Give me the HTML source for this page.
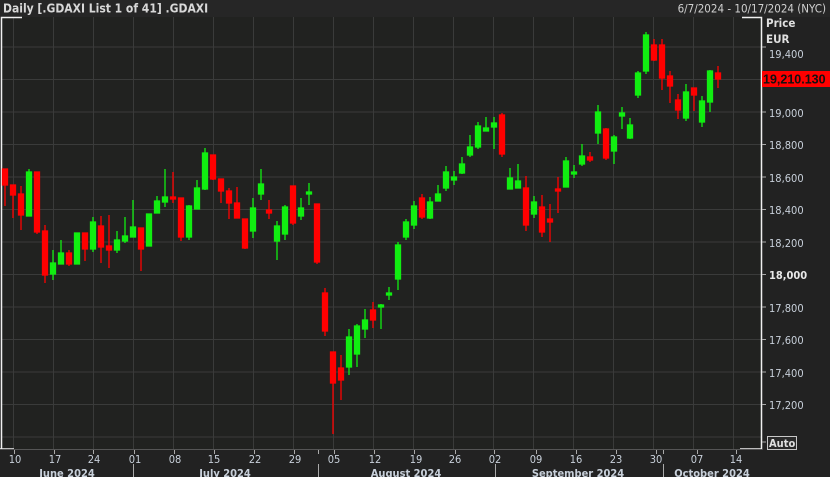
<!DOCTYPE html>
<html><head><meta charset="utf-8"><style>
html,body{margin:0;padding:0;background:#222222;width:830px;height:477px;overflow:hidden}
svg{display:block}
text{font-family:"DejaVu Sans Condensed","Liberation Sans",sans-serif}
</style></head><body>
<svg width="830" height="477" viewBox="0 0 830 477" xmlns="http://www.w3.org/2000/svg">
<rect width="830" height="477" fill="#222222"/>
<rect x="0" y="0" width="830" height="17" fill="#262626"/>
<text x="3" y="12.5" font-size="12" font-weight="bold" fill="#d8d8d8">Daily [.GDAXI List 1 of 41] .GDAXI</text>
<text x="826" y="12.5" font-size="11.5" fill="#d0d0d0" text-anchor="end">6/7/2024 - 10/17/2024 (NYC)</text>
<rect x="1" y="17" width="760" height="432" fill="#212220"/>
<g stroke="#3a3b3a" stroke-width="1">
<line x1="1" y1="47" x2="761" y2="47"/><line x1="1" y1="79.5" x2="761" y2="79.5"/><line x1="1" y1="112" x2="761" y2="112"/><line x1="1" y1="144.5" x2="761" y2="144.5"/><line x1="1" y1="177" x2="761" y2="177"/><line x1="1" y1="209.5" x2="761" y2="209.5"/><line x1="1" y1="242" x2="761" y2="242"/><line x1="1" y1="274.5" x2="761" y2="274.5"/><line x1="1" y1="307" x2="761" y2="307"/><line x1="1" y1="339.5" x2="761" y2="339.5"/><line x1="1" y1="372" x2="761" y2="372"/><line x1="1" y1="404.5" x2="761" y2="404.5"/><line x1="1" y1="437" x2="761" y2="437"/>
<line x1="13.5" y1="17" x2="13.5" y2="449"/><line x1="53.5" y1="17" x2="53.5" y2="449"/><line x1="93.5" y1="17" x2="93.5" y2="449"/><line x1="133.5" y1="17" x2="133.5" y2="449"/><line x1="173.5" y1="17" x2="173.5" y2="449"/><line x1="213.5" y1="17" x2="213.5" y2="449"/><line x1="253.5" y1="17" x2="253.5" y2="449"/><line x1="293.5" y1="17" x2="293.5" y2="449"/><line x1="333.5" y1="17" x2="333.5" y2="449"/><line x1="373.5" y1="17" x2="373.5" y2="449"/><line x1="413.5" y1="17" x2="413.5" y2="449"/><line x1="453.5" y1="17" x2="453.5" y2="449"/><line x1="493.5" y1="17" x2="493.5" y2="449"/><line x1="533.5" y1="17" x2="533.5" y2="449"/><line x1="573.5" y1="17" x2="573.5" y2="449"/><line x1="613.5" y1="17" x2="613.5" y2="449"/><line x1="653.5" y1="17" x2="653.5" y2="449"/><line x1="693.5" y1="17" x2="693.5" y2="449"/><line x1="733.5" y1="17" x2="733.5" y2="449"/>
</g>
<g stroke="#f0f0f0" stroke-width="1.5" fill="none">
<path d="M1.5 449 V17.5 H22"/>
<path d="M742 17.5 H761.5 V449 H740"/>
<path d="M0 449 H14"/>
</g>
<line x1="0" y1="449.5" x2="762" y2="449.5" stroke="#555" stroke-width="1"/>
<g stroke="#ff0000" fill="#ff0000" stroke-width="1.3">
<line x1="5" y1="169" x2="5" y2="206"/><rect x="2.5" y="169" width="5" height="16"/>
<line x1="13" y1="185" x2="13" y2="218"/><rect x="10.5" y="185" width="5" height="10"/>
<line x1="21" y1="186" x2="21" y2="230"/><rect x="18.5" y="194" width="5" height="21"/>
<line x1="37" y1="172" x2="37" y2="234"/><rect x="34.5" y="172" width="5" height="60"/>
<line x1="45" y1="225" x2="45" y2="283"/><rect x="42.5" y="231" width="5" height="44"/>
<line x1="69" y1="250" x2="69" y2="266"/><rect x="66.5" y="253" width="5" height="11"/>
<line x1="85" y1="233" x2="85" y2="261"/><rect x="82.5" y="233" width="5" height="16"/>
<line x1="101" y1="216" x2="101" y2="263"/><rect x="98.5" y="226" width="5" height="21"/>
<line x1="109" y1="215" x2="109" y2="268"/><rect x="106.5" y="246" width="5" height="4"/>
<line x1="141" y1="228" x2="141" y2="271"/><rect x="138.5" y="228" width="5" height="21"/>
<line x1="173" y1="172" x2="173" y2="203"/><rect x="170.5" y="197" width="5" height="2"/>
<line x1="181" y1="198" x2="181" y2="241"/><rect x="178.5" y="198" width="5" height="39"/>
<line x1="213" y1="155" x2="213" y2="180"/><rect x="210.5" y="155" width="5" height="24"/>
<line x1="221" y1="179" x2="221" y2="203"/><rect x="218.5" y="179" width="5" height="12"/>
<line x1="229" y1="188" x2="229" y2="219"/><rect x="226.5" y="191" width="5" height="12"/>
<line x1="237" y1="187" x2="237" y2="218"/><rect x="234.5" y="203" width="5" height="15"/>
<line x1="245" y1="219" x2="245" y2="249"/><rect x="242.5" y="219" width="5" height="29"/>
<line x1="269" y1="200" x2="269" y2="219"/><rect x="266.5" y="210" width="5" height="3"/>
<line x1="293" y1="186" x2="293" y2="225"/><rect x="290.5" y="186" width="5" height="37"/>
<line x1="317" y1="204" x2="317" y2="264"/><rect x="314.5" y="204" width="5" height="58"/>
<line x1="325" y1="288" x2="325" y2="336"/><rect x="322.5" y="293" width="5" height="38"/>
<line x1="333" y1="352" x2="333" y2="434"/><rect x="330.5" y="352" width="5" height="31"/>
<line x1="341" y1="355" x2="341" y2="400"/><rect x="338.5" y="368" width="5" height="12"/>
<line x1="373" y1="302" x2="373" y2="328"/><rect x="370.5" y="310" width="5" height="10"/>
<line x1="422" y1="194" x2="422" y2="219"/><rect x="419.5" y="198" width="5" height="19"/>
<line x1="502" y1="113" x2="502" y2="157"/><rect x="499.5" y="115" width="5" height="39"/>
<line x1="526" y1="176" x2="526" y2="231"/><rect x="523.5" y="188" width="5" height="37"/>
<line x1="542" y1="195" x2="542" y2="237"/><rect x="539.5" y="207" width="5" height="25"/>
<line x1="550" y1="204" x2="550" y2="242"/><rect x="547.5" y="219" width="5" height="3"/>
<line x1="558" y1="177" x2="558" y2="213"/><rect x="555.5" y="189" width="5" height="2"/>
<line x1="590" y1="152" x2="590" y2="162"/><rect x="587.5" y="157" width="5" height="3"/>
<line x1="606" y1="128" x2="606" y2="160"/><rect x="603.5" y="129" width="5" height="29"/>
<line x1="654" y1="39" x2="654" y2="61"/><rect x="651.5" y="45" width="5" height="15"/>
<line x1="662" y1="39" x2="662" y2="90"/><rect x="659.5" y="45" width="5" height="33"/>
<line x1="670" y1="71" x2="670" y2="103"/><rect x="667.5" y="76" width="5" height="10"/>
<line x1="678" y1="94" x2="678" y2="119"/><rect x="675.5" y="100" width="5" height="10"/>
<line x1="694" y1="88" x2="694" y2="111"/><rect x="691.5" y="88" width="5" height="7"/>
<line x1="718" y1="66" x2="718" y2="88"/><rect x="715.5" y="73" width="5" height="6"/>
</g>
<g stroke="#11ee11" fill="#11ee11" stroke-width="1.3">
<line x1="29" y1="169" x2="29" y2="216"/><rect x="26.5" y="172" width="5" height="44"/>
<line x1="53" y1="250" x2="53" y2="280"/><rect x="50.5" y="263" width="5" height="11"/>
<line x1="61" y1="240" x2="61" y2="264"/><rect x="58.5" y="253" width="5" height="11"/>
<line x1="77" y1="233" x2="77" y2="264"/><rect x="74.5" y="233" width="5" height="31"/>
<line x1="93" y1="217" x2="93" y2="252"/><rect x="90.5" y="222" width="5" height="27"/>
<line x1="117" y1="231" x2="117" y2="253"/><rect x="114.5" y="240" width="5" height="10"/>
<line x1="125" y1="217" x2="125" y2="243"/><rect x="122.5" y="236" width="5" height="5"/>
<line x1="133" y1="200" x2="133" y2="237"/><rect x="130.5" y="227" width="5" height="10"/>
<line x1="149" y1="214" x2="149" y2="246"/><rect x="146.5" y="214" width="5" height="32"/>
<line x1="157" y1="196" x2="157" y2="213"/><rect x="154.5" y="201" width="5" height="12"/>
<line x1="165" y1="169" x2="165" y2="207"/><rect x="162.5" y="197" width="5" height="5"/>
<line x1="189" y1="205" x2="189" y2="240"/><rect x="186.5" y="206" width="5" height="31"/>
<line x1="197" y1="180" x2="197" y2="209"/><rect x="194.5" y="188" width="5" height="21"/>
<line x1="205" y1="148" x2="205" y2="190"/><rect x="202.5" y="153" width="5" height="36"/>
<line x1="253" y1="198" x2="253" y2="238"/><rect x="250.5" y="208" width="5" height="23"/>
<line x1="261" y1="169" x2="261" y2="200"/><rect x="258.5" y="184" width="5" height="10"/>
<line x1="277" y1="221" x2="277" y2="260"/><rect x="274.5" y="226" width="5" height="15"/>
<line x1="285" y1="205" x2="285" y2="240"/><rect x="282.5" y="207" width="5" height="27"/>
<line x1="301" y1="198" x2="301" y2="220"/><rect x="298.5" y="208" width="5" height="8"/>
<line x1="309" y1="183" x2="309" y2="205"/><rect x="306.5" y="192" width="5" height="2"/>
<line x1="349" y1="329" x2="349" y2="375"/><rect x="346.5" y="337" width="5" height="30"/>
<line x1="357" y1="324" x2="357" y2="367"/><rect x="354.5" y="326" width="5" height="28"/>
<line x1="365" y1="309" x2="365" y2="338"/><rect x="362.5" y="320" width="5" height="9"/>
<line x1="381" y1="304" x2="381" y2="329"/><rect x="378.5" y="305" width="5" height="2"/>
<line x1="389" y1="287" x2="389" y2="300"/><rect x="386.5" y="293" width="5" height="2"/>
<line x1="398" y1="242" x2="398" y2="290"/><rect x="395.5" y="245" width="5" height="34"/>
<line x1="406" y1="219" x2="406" y2="240"/><rect x="403.5" y="222" width="5" height="15"/>
<line x1="414" y1="201" x2="414" y2="229"/><rect x="411.5" y="206" width="5" height="19"/>
<line x1="430" y1="197" x2="430" y2="219"/><rect x="427.5" y="202" width="5" height="16"/>
<line x1="438" y1="185" x2="438" y2="201"/><rect x="435.5" y="194" width="5" height="7"/>
<line x1="446" y1="166" x2="446" y2="191"/><rect x="443.5" y="172" width="5" height="16"/>
<line x1="454" y1="171" x2="454" y2="185"/><rect x="451.5" y="177" width="5" height="3"/>
<line x1="462" y1="157" x2="462" y2="174"/><rect x="459.5" y="164" width="5" height="9"/>
<line x1="470" y1="135" x2="470" y2="157"/><rect x="467.5" y="147" width="5" height="8"/>
<line x1="478" y1="122" x2="478" y2="149"/><rect x="475.5" y="126" width="5" height="21"/>
<line x1="486" y1="117" x2="486" y2="131"/><rect x="483.5" y="128" width="5" height="3"/>
<line x1="494" y1="117" x2="494" y2="149"/><rect x="491.5" y="123" width="5" height="4"/>
<line x1="510" y1="168" x2="510" y2="189"/><rect x="507.5" y="178" width="5" height="11"/>
<line x1="518" y1="164" x2="518" y2="188"/><rect x="515.5" y="181" width="5" height="7"/>
<line x1="534" y1="196" x2="534" y2="218"/><rect x="531.5" y="202" width="5" height="12"/>
<line x1="566" y1="157" x2="566" y2="187"/><rect x="563.5" y="161" width="5" height="26"/>
<line x1="574" y1="165" x2="574" y2="178"/><rect x="571.5" y="172" width="5" height="2"/>
<line x1="582" y1="144" x2="582" y2="166"/><rect x="579.5" y="156" width="5" height="8"/>
<line x1="598" y1="105" x2="598" y2="144"/><rect x="595.5" y="112" width="5" height="21"/>
<line x1="614" y1="135" x2="614" y2="164"/><rect x="611.5" y="137" width="5" height="14"/>
<line x1="622" y1="107" x2="622" y2="129"/><rect x="619.5" y="113" width="5" height="3"/>
<line x1="630" y1="118" x2="630" y2="139"/><rect x="627.5" y="125" width="5" height="13"/>
<line x1="638" y1="71" x2="638" y2="98"/><rect x="635.5" y="73" width="5" height="22"/>
<line x1="646" y1="32" x2="646" y2="74"/><rect x="643.5" y="35" width="5" height="36"/>
<line x1="686" y1="84" x2="686" y2="121"/><rect x="683.5" y="92" width="5" height="26"/>
<line x1="702" y1="96" x2="702" y2="127"/><rect x="699.5" y="101" width="5" height="21"/>
<line x1="710" y1="70" x2="710" y2="112"/><rect x="707.5" y="71" width="5" height="31"/>
</g>
<g font-size="11.5" fill="#e0e0e0" font-weight="bold">
<text x="766" y="27">Price</text>
<text x="766" y="43">EUR</text>
</g>
<g stroke="#aaa" stroke-width="1">
<line x1="762" y1="47" x2="766" y2="47"/><line x1="762" y1="112" x2="766" y2="112"/><line x1="762" y1="144.5" x2="766" y2="144.5"/><line x1="762" y1="177" x2="766" y2="177"/><line x1="762" y1="209.5" x2="766" y2="209.5"/><line x1="762" y1="242" x2="766" y2="242"/><line x1="762" y1="274.5" x2="766" y2="274.5"/><line x1="762" y1="307" x2="766" y2="307"/><line x1="762" y1="339.5" x2="766" y2="339.5"/><line x1="762" y1="372" x2="766" y2="372"/><line x1="762" y1="404.5" x2="766" y2="404.5"/><line x1="762" y1="442" x2="766" y2="442"/>
</g>
<g font-size="11" fill="#c8d0da">
<text x="769" y="58">19,400</text>
<text x="769" y="117">19,000</text>
<text x="769" y="149">18,800</text>
<text x="769" y="182">18,600</text>
<text x="769" y="214">18,400</text>
<text x="769" y="247">18,200</text>
<text x="769" y="279" font-weight="bold" fill="#e8e8e8">18,000</text>
<text x="769" y="312">17,800</text>
<text x="769" y="344">17,600</text>
<text x="769" y="377">17,400</text>
<text x="769" y="409">17,200</text>
</g>
<rect x="762" y="71" width="68" height="16" fill="#ff0000"/>
<text x="763" y="83.5" font-size="12.5" font-weight="bold" fill="#111" style="font-family:'Liberation Sans',sans-serif">19,210.130</text>
<rect x="767.5" y="436.5" width="29" height="13" fill="#2a2a2a" stroke="#c8c8c8" stroke-width="1"/>
<text x="769" y="447" font-size="11" font-weight="bold" fill="#e0e0e0">Auto</text>
<g stroke="#aaa" stroke-width="1">
<line x1="14.5" y1="450" x2="14.5" y2="454"/><line x1="54.5" y1="450" x2="54.5" y2="454"/><line x1="93.5" y1="450" x2="93.5" y2="454"/><line x1="134.5" y1="450" x2="134.5" y2="454"/><line x1="174.5" y1="450" x2="174.5" y2="454"/><line x1="214.5" y1="450" x2="214.5" y2="454"/><line x1="254.5" y1="450" x2="254.5" y2="454"/><line x1="294.5" y1="450" x2="294.5" y2="454"/><line x1="318.5" y1="450" x2="318.5" y2="454"/><line x1="334.5" y1="450" x2="334.5" y2="454"/><line x1="374.5" y1="450" x2="374.5" y2="454"/><line x1="414.5" y1="450" x2="414.5" y2="454"/><line x1="455.5" y1="450" x2="455.5" y2="454"/><line x1="494.5" y1="450" x2="494.5" y2="454"/><line x1="536.5" y1="450" x2="536.5" y2="454"/><line x1="576.5" y1="450" x2="576.5" y2="454"/><line x1="616.5" y1="450" x2="616.5" y2="454"/><line x1="656.5" y1="450" x2="656.5" y2="454"/><line x1="663.5" y1="450" x2="663.5" y2="454"/><line x1="697.5" y1="450" x2="697.5" y2="454"/><line x1="736.5" y1="450" x2="736.5" y2="454"/>
<line x1="133.5" y1="464" x2="133.5" y2="477"/><line x1="318.5" y1="464" x2="318.5" y2="477"/><line x1="495.5" y1="464" x2="495.5" y2="477"/><line x1="663.5" y1="464" x2="663.5" y2="477"/>
</g>
<g font-size="11" fill="#c8d0da" text-anchor="middle">
<text x="15" y="463">10</text><text x="55" y="463">17</text><text x="94" y="463">24</text><text x="135" y="463">01</text><text x="175" y="463">08</text><text x="214" y="463">15</text><text x="255" y="463">22</text><text x="295" y="463">29</text><text x="334" y="463">05</text><text x="375" y="463">12</text><text x="416" y="463">19</text><text x="455" y="463">26</text><text x="495" y="463">02</text><text x="536" y="463">09</text><text x="576" y="463">16</text><text x="616" y="463">23</text><text x="656" y="463">30</text><text x="697" y="463">07</text><text x="736" y="463">14</text>
</g>
<g font-size="11" font-weight="bold" fill="#c8d0da" text-anchor="middle">
<text x="67" y="477">June 2024</text>
<text x="225" y="477">July 2024</text>
<text x="406" y="477">August 2024</text>
<text x="578" y="477">September 2024</text>
<text x="712" y="477">October 2024</text>
</g>
</svg>
</body></html>
